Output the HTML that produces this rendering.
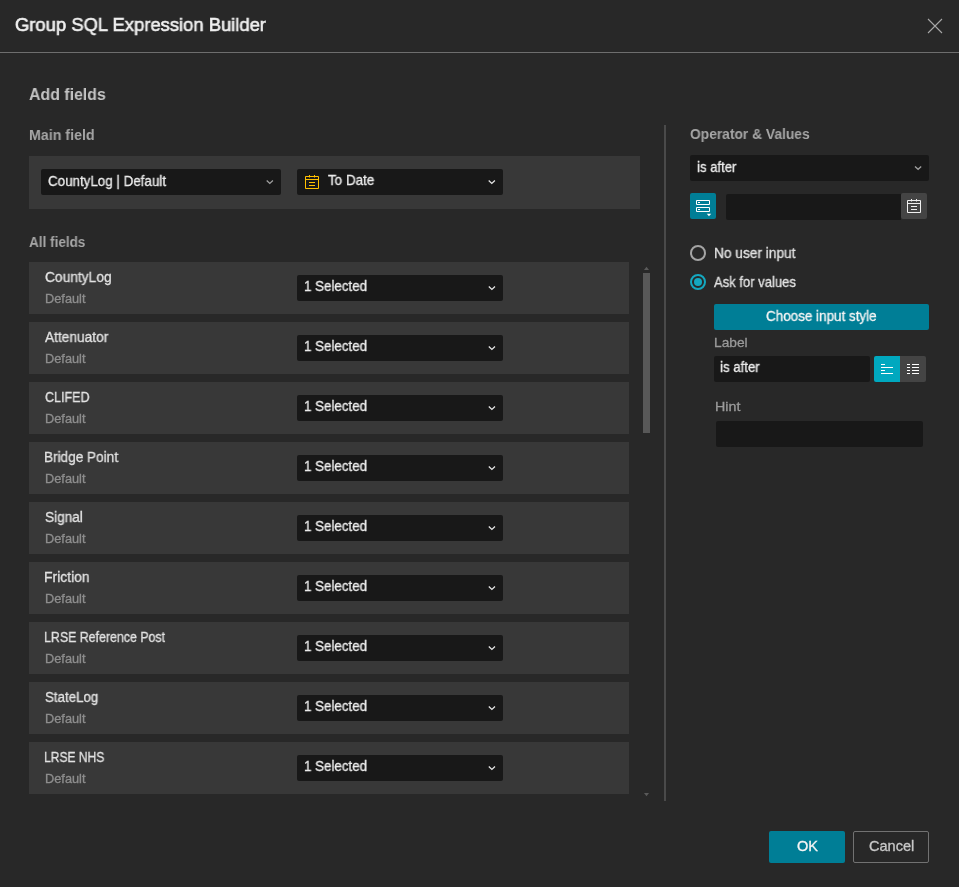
<!DOCTYPE html>
<html><head><meta charset="utf-8">
<style>
*{box-sizing:border-box;margin:0;padding:0}
html,body{width:959px;height:887px;overflow:hidden;background:#282828;font-family:"Liberation Sans",sans-serif;color:#e6e6e6}
.a{position:absolute}
.t{position:absolute;white-space:nowrap;line-height:1;transform-origin:0 0;will-change:transform;-webkit-text-stroke-width:0.3px}
.dd{position:absolute;background:#181818;border-radius:2px}
.row{position:absolute;left:29px;width:600px;height:52px;background:#383838}
</style></head><body>
<div class="t" style="left:14.58px;top:16.02px;font-size:18.8px;color:#f0f0f0;transform:scaleX(0.9799);-webkit-text-stroke:0.6px #f0f0f0;">Group SQL Expression Builder</div>
<svg class="a" style="left:927px;top:18px" width="16" height="16" viewBox="0 0 16 16"><path d="M1 1L15 15M15 1L1 15" stroke="#a8a8a8" stroke-width="1.1" fill="none"/></svg>
<div class="a" style="left:0;top:52px;width:959px;height:1px;background:#6e6e6e"></div>
<div class="t" style="left:28.52px;top:85.55px;font-size:17px;font-weight:bold;-webkit-text-stroke-width:0;color:#c4c4c4;transform:scaleX(0.9343);">Add fields</div>
<div class="t" style="left:28.50px;top:128.48px;font-size:14.5px;font-weight:bold;-webkit-text-stroke-width:0;color:#a6a6a6;transform:scaleX(0.9806);">Main field</div>
<div class="a" style="left:29px;top:156px;width:611px;height:53px;background:#383838"></div>
<div class="dd" style="left:41px;top:169px;width:240px;height:26px"></div>
<div class="t" style="left:47.83px;top:174.23px;font-size:14.2px;color:#ececec;transform:scaleX(0.9430);">CountyLog | Default</div>
<svg class="a" style="left:263px;top:177px" width="12" height="9" viewBox="263 177 12 9"><path d="M266.70 180.60L269.80 183.40L272.90 180.60" stroke="#a0a0a0" stroke-width="1.3" fill="none"/></svg>
<div class="dd" style="left:297px;top:169px;width:206px;height:26px"></div>
<svg class="a" style="left:305px;top:175px" width="14" height="14" viewBox="0 0 14 14" fill="none" stroke="#ffc000" stroke-width="1"><path d="M0.5 1.5H13.5V13.5H0.5Z"/><path d="M0.5 4.5H13.5"/><path d="M4.5 0V2.5M9.5 0V2.5"/><path d="M4 7.5H10M4 10.5H10"/></svg>
<div class="t" style="left:327.63px;top:173.13px;font-size:14.2px;color:#ececec;transform:scaleX(0.9459);">To Date</div>
<svg class="a" style="left:485px;top:177px" width="12" height="9" viewBox="485 177 12 9"><path d="M488.70 180.60L491.80 183.40L494.90 180.60" stroke="#e6e6e6" stroke-width="1.3" fill="none"/></svg>
<div class="t" style="left:28.79px;top:234.68px;font-size:14.5px;font-weight:bold;-webkit-text-stroke-width:0;color:#a6a6a6;transform:scaleX(0.9336);">All fields</div>
<div class="a" style="left:0;top:262px;width:660px;height:536px;overflow:hidden">
<div class="row" style="top:0px"></div>
<div class="dd" style="left:297px;top:13px;width:206px;height:26px"></div>
<div class="row" style="top:60px"></div>
<div class="dd" style="left:297px;top:73px;width:206px;height:26px"></div>
<div class="row" style="top:120px"></div>
<div class="dd" style="left:297px;top:133px;width:206px;height:26px"></div>
<div class="row" style="top:180px"></div>
<div class="dd" style="left:297px;top:193px;width:206px;height:26px"></div>
<div class="row" style="top:240px"></div>
<div class="dd" style="left:297px;top:253px;width:206px;height:26px"></div>
<div class="row" style="top:300px"></div>
<div class="dd" style="left:297px;top:313px;width:206px;height:26px"></div>
<div class="row" style="top:360px"></div>
<div class="dd" style="left:297px;top:373px;width:206px;height:26px"></div>
<div class="row" style="top:420px"></div>
<div class="dd" style="left:297px;top:433px;width:206px;height:26px"></div>
<div class="row" style="top:480px"></div>
<div class="dd" style="left:297px;top:493px;width:206px;height:26px"></div>
</div>
<div class="t" style="left:44.71px;top:270.30px;font-size:14.0px;color:#e2e2e2;transform:scaleX(0.9837);">CountyLog</div>
<div class="t" style="left:44.88px;top:293.29px;font-size:12.6px;color:#8e8e8e;transform:scaleX(1.0153);">Default</div>
<div class="t" style="left:304.47px;top:278.73px;font-size:14.2px;color:#ececec;transform:scaleX(0.9397);">1 Selected</div>
<svg class="a" style="left:485px;top:283px" width="12" height="9" viewBox="485 283 12 9"><path d="M488.80 286.60L491.90 289.40L495.00 286.60" stroke="#e6e6e6" stroke-width="1.3" fill="none"/></svg>
<div class="t" style="left:45.00px;top:330.30px;font-size:14.0px;color:#e2e2e2;transform:scaleX(0.9783);">Attenuator</div>
<div class="t" style="left:44.88px;top:353.29px;font-size:12.6px;color:#8e8e8e;transform:scaleX(1.0153);">Default</div>
<div class="t" style="left:304.47px;top:338.73px;font-size:14.2px;color:#ececec;transform:scaleX(0.9397);">1 Selected</div>
<svg class="a" style="left:485px;top:343px" width="12" height="9" viewBox="485 343 12 9"><path d="M488.80 346.60L491.90 349.40L495.00 346.60" stroke="#e6e6e6" stroke-width="1.3" fill="none"/></svg>
<div class="t" style="left:44.77px;top:390.30px;font-size:14.0px;color:#e2e2e2;transform:scaleX(0.8939);">CLIFED</div>
<div class="t" style="left:44.88px;top:413.29px;font-size:12.6px;color:#8e8e8e;transform:scaleX(1.0153);">Default</div>
<div class="t" style="left:304.47px;top:398.73px;font-size:14.2px;color:#ececec;transform:scaleX(0.9397);">1 Selected</div>
<svg class="a" style="left:485px;top:403px" width="12" height="9" viewBox="485 403 12 9"><path d="M488.80 406.60L491.90 409.40L495.00 406.60" stroke="#e6e6e6" stroke-width="1.3" fill="none"/></svg>
<div class="t" style="left:44.31px;top:450.30px;font-size:14.0px;color:#e2e2e2;transform:scaleX(0.9701);">Bridge Point</div>
<div class="t" style="left:44.88px;top:473.29px;font-size:12.6px;color:#8e8e8e;transform:scaleX(1.0153);">Default</div>
<div class="t" style="left:304.47px;top:458.73px;font-size:14.2px;color:#ececec;transform:scaleX(0.9397);">1 Selected</div>
<svg class="a" style="left:485px;top:463px" width="12" height="9" viewBox="485 463 12 9"><path d="M488.80 466.60L491.90 469.40L495.00 466.60" stroke="#e6e6e6" stroke-width="1.3" fill="none"/></svg>
<div class="t" style="left:44.72px;top:510.30px;font-size:14.0px;color:#e2e2e2;transform:scaleX(0.9721);">Signal</div>
<div class="t" style="left:44.88px;top:533.29px;font-size:12.6px;color:#8e8e8e;transform:scaleX(1.0153);">Default</div>
<div class="t" style="left:304.47px;top:518.73px;font-size:14.2px;color:#ececec;transform:scaleX(0.9397);">1 Selected</div>
<svg class="a" style="left:485px;top:523px" width="12" height="9" viewBox="485 523 12 9"><path d="M488.80 526.60L491.90 529.40L495.00 526.60" stroke="#e6e6e6" stroke-width="1.3" fill="none"/></svg>
<div class="t" style="left:44.29px;top:570.30px;font-size:14.0px;color:#e2e2e2;transform:scaleX(0.9941);">Friction</div>
<div class="t" style="left:44.88px;top:593.29px;font-size:12.6px;color:#8e8e8e;transform:scaleX(1.0153);">Default</div>
<div class="t" style="left:304.47px;top:578.73px;font-size:14.2px;color:#ececec;transform:scaleX(0.9397);">1 Selected</div>
<svg class="a" style="left:485px;top:583px" width="12" height="9" viewBox="485 583 12 9"><path d="M488.80 586.60L491.90 589.40L495.00 586.60" stroke="#e6e6e6" stroke-width="1.3" fill="none"/></svg>
<div class="t" style="left:44.41px;top:630.30px;font-size:14.0px;color:#e2e2e2;transform:scaleX(0.8837);">LRSE Reference Post</div>
<div class="t" style="left:44.88px;top:653.29px;font-size:12.6px;color:#8e8e8e;transform:scaleX(1.0153);">Default</div>
<div class="t" style="left:304.47px;top:638.73px;font-size:14.2px;color:#ececec;transform:scaleX(0.9397);">1 Selected</div>
<svg class="a" style="left:485px;top:643px" width="12" height="9" viewBox="485 643 12 9"><path d="M488.80 646.60L491.90 649.40L495.00 646.60" stroke="#e6e6e6" stroke-width="1.3" fill="none"/></svg>
<div class="t" style="left:44.74px;top:690.30px;font-size:14.0px;color:#e2e2e2;transform:scaleX(0.9493);">StateLog</div>
<div class="t" style="left:44.88px;top:713.29px;font-size:12.6px;color:#8e8e8e;transform:scaleX(1.0153);">Default</div>
<div class="t" style="left:304.47px;top:698.73px;font-size:14.2px;color:#ececec;transform:scaleX(0.9397);">1 Selected</div>
<svg class="a" style="left:485px;top:703px" width="12" height="9" viewBox="485 703 12 9"><path d="M488.80 706.60L491.90 709.40L495.00 706.60" stroke="#e6e6e6" stroke-width="1.3" fill="none"/></svg>
<div class="t" style="left:44.44px;top:750.30px;font-size:14.0px;color:#e2e2e2;transform:scaleX(0.8607);">LRSE NHS</div>
<div class="t" style="left:44.88px;top:773.29px;font-size:12.6px;color:#8e8e8e;transform:scaleX(1.0153);">Default</div>
<div class="t" style="left:304.47px;top:758.73px;font-size:14.2px;color:#ececec;transform:scaleX(0.9397);">1 Selected</div>
<svg class="a" style="left:485px;top:763px" width="12" height="9" viewBox="485 763 12 9"><path d="M488.80 766.60L491.90 769.40L495.00 766.60" stroke="#e6e6e6" stroke-width="1.3" fill="none"/></svg>
<div class="a" style="left:643px;top:273px;width:7px;height:160px;background:#585858"></div>
<svg class="a" style="left:643px;top:266px" width="7" height="5" viewBox="0 0 7 5"><path d="M3.5 0.8L6 4H1Z" fill="#5a5a5a"/></svg>
<svg class="a" style="left:643px;top:792px" width="7" height="5" viewBox="0 0 7 5"><path d="M1 1H6L3.5 4.2Z" fill="#5a5a5a"/></svg>
<div class="a" style="left:664px;top:125px;width:2px;height:676px;background:#4a4a4a"></div>
<div class="t" style="left:689.95px;top:126.67px;font-size:14.5px;font-weight:bold;-webkit-text-stroke-width:0;color:#a6a6a6;transform:scaleX(0.9514);">Operator &amp; Values</div>
<div class="dd" style="left:690px;top:155px;width:239px;height:26px"></div>
<div class="t" style="left:696.98px;top:159.73px;font-size:14.2px;color:#ececec;transform:scaleX(0.9261);">is after</div>
<svg class="a" style="left:912px;top:163px" width="12" height="9" viewBox="912 163 12 9"><path d="M915.00 166.50L918.10 169.30L921.20 166.50" stroke="#a0a0a0" stroke-width="1.3" fill="none"/></svg>
<div class="a" style="left:690px;top:193px;width:26px;height:26px;background:#007e96;border-radius:2px"></div>
<svg class="a" style="left:690px;top:193px" width="26" height="26" viewBox="0 0 26 26" fill="none" stroke="#fff" stroke-width="1"><path d="M6.5 7.5H19.5V11.5H6.5Z M6.5 14.5H19.5V18.5H6.5Z"/><path d="M8 9.5H10M8 16.5H10"/><path d="M16.8 20.8H21.2L19 23.2Z" fill="#fff" stroke="none"/></svg>
<div class="dd" style="left:726px;top:194px;width:175px;height:26px;border-radius:2px 0 0 2px"></div>
<div class="a" style="left:901px;top:193px;width:26px;height:26px;background:#444;border-radius:2px"></div>
<svg class="a" style="left:907px;top:199px" width="14" height="14" viewBox="0 0 14 14" fill="none" stroke="#f0f0f0" stroke-width="1"><path d="M0.5 1.5H13.5V13.5H0.5Z"/><path d="M0.5 4.5H13.5"/><path d="M4.5 0V2.5M9.5 0V2.5"/><path d="M4 7.5H10M4 10.5H10"/></svg>
<div class="a" style="left:690px;top:245px;width:16px;height:16px;border:2px solid #a4a4a4;border-radius:50%"></div>
<div class="t" style="left:714.00px;top:246.33px;font-size:14.2px;color:#e2e2e2;transform:scaleX(0.9656);">No user input</div>
<div class="a" style="left:690px;top:274px;width:16px;height:16px;border:2px solid #14a8c0;border-radius:50%"></div>
<div class="a" style="left:694px;top:278px;width:8px;height:8px;background:#14a8c0;border-radius:50%"></div>
<div class="t" style="left:714.00px;top:275.03px;font-size:14.2px;color:#e2e2e2;transform:scaleX(0.9194);">Ask for values</div>
<div class="a" style="left:714px;top:304px;width:215px;height:26px;background:#007e96;border-radius:2px"></div>
<div class="t" style="left:766.03px;top:308.93px;font-size:14.2px;color:#f4f4f4;transform:scaleX(0.9476);">Choose input style</div>
<div class="t" style="left:713.50px;top:335.71px;font-size:13.4px;color:#9a9a9a;transform:scaleX(1.0253);">Label</div>
<div class="dd" style="left:714px;top:356px;width:156px;height:26px"></div>
<div class="t" style="left:720.47px;top:359.73px;font-size:14.2px;color:#ececec;transform:scaleX(0.9333);">is after</div>
<div class="a" style="left:874px;top:356px;width:26px;height:26px;background:#00a8bf;border-radius:2px 0 0 2px"></div>
<div class="a" style="left:900px;top:356px;width:26px;height:26px;background:#444;border-radius:0 2px 2px 0"></div>
<svg class="a" style="left:874px;top:356px" width="52" height="26" viewBox="0 0 52 26" fill="none" stroke="#fff" stroke-width="1"><path d="M7 8.5H11M7 11.5H19M7 14.5H11M7 17.5H19"/><path d="M33 8.5H36M33 11.5H36M33 14.5H36M33 17.5H36M38 8.5H45M38 11.5H45M38 14.5H45M38 17.5H45"/></svg>
<div class="t" style="left:714.76px;top:399.81px;font-size:13.4px;color:#9a9a9a;transform:scaleX(1.0642);">Hint</div>
<div class="dd" style="left:716px;top:421px;width:207px;height:26px"></div>
<div class="a" style="left:769px;top:831px;width:76px;height:32px;background:#007e96;border-radius:2px"></div>
<div class="t" style="left:796.67px;top:839.23px;font-size:14.2px;color:#f4f4f4;transform:scaleX(1.0257);">OK</div>
<div class="a" style="left:853px;top:831px;width:76px;height:32px;border:1px solid #727272;border-radius:2px"></div>
<div class="t" style="left:868.67px;top:839.23px;font-size:14.2px;color:#c8c8c8;transform:scaleX(1.0258);">Cancel</div>
</body></html>
